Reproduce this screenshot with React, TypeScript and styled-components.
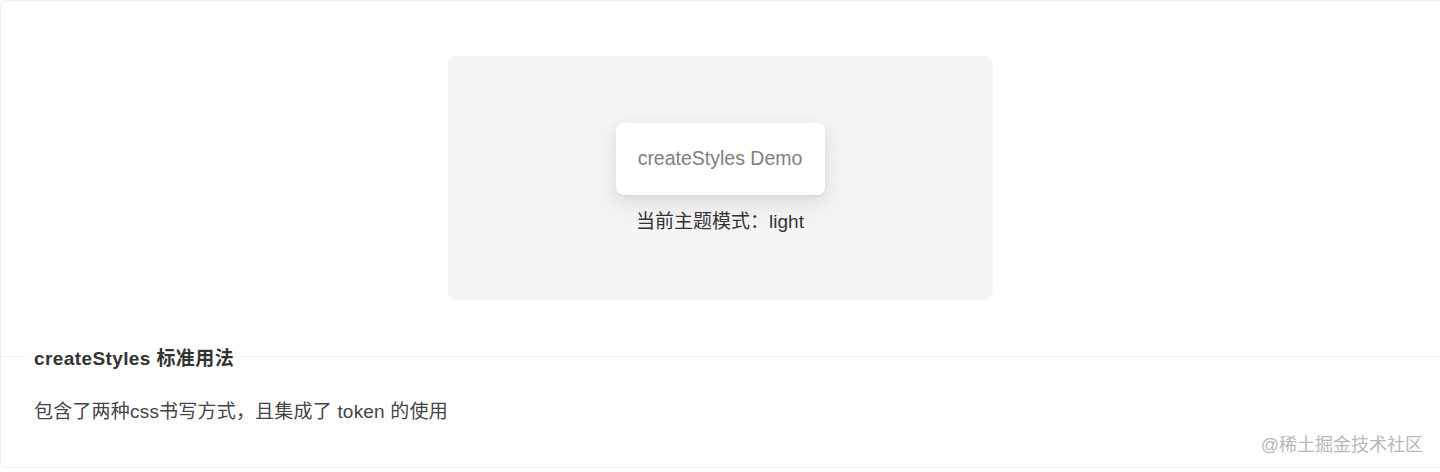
import styled, { createGlobalStyle } from "styled-components";

const GlobalStyle = createGlobalStyle`
  html, body {
    margin: 0;
    padding: 0;
    background: #fff;
  }
  body {
    font-family: "Liberation Sans", "Noto Sans CJK SC", sans-serif;
    overflow: hidden;
  }
`;

const CodeBox = styled.section`
  position: relative;
  width: calc(100% + 8px);
  height: 468px;
  box-sizing: border-box;
  border: 1px solid #efefef;
  border-radius: 6px;
  background: #fff;
`;

const Preview = styled.div`
  display: flex;
  justify-content: center;
  padding: 55px 0 44px;
  margin-right: 8px;
`;

const Stage = styled.div`
  width: 545px;
  height: 244px;
  border-radius: 8px;
  background: #f5f5f5;
  display: flex;
  flex-direction: column;
  align-items: center;
  justify-content: center;
  gap: 15px;
  box-sizing: border-box;
`;

const DemoCard = styled.div`
  width: 209px;
  height: 72px;
  border-radius: 8px;
  background: #fff;
  display: flex;
  align-items: center;
  justify-content: center;
  font-size: 19.5px;
  color: #808080;
  box-shadow: 0 6px 16px 0 rgba(0, 0, 0, 0.07),
    0 3px 6px -4px rgba(0, 0, 0, 0.1), 0 9px 28px 8px rgba(0, 0, 0, 0.04);
`;

const ThemeText = styled.div`
  font-size: 19px;
  line-height: 24px;
  color: #333;
`;

const Meta = styled.div`
  margin-right: 8px;
`;

const TitleRow = styled.div`
  display: flex;
  align-items: center;
  height: 24px;
`;

const Line = styled.div<{ $grow?: boolean }>`
  height: 1px;
  background: #efefef;
  width: ${(p) => (p.$grow ? "auto" : "25px")};
  flex: ${(p) => (p.$grow ? 1 : "none")};
`;

const Title = styled.div`
  padding: 0 8px;
  font-size: 19px;
  font-weight: 700;
  letter-spacing: 0.4px;
  color: #333;
  white-space: nowrap;
`;

const Description = styled.p`
  margin: 30px 0 0;
  padding-left: 33px;
  font-size: 19px;
  line-height: 28px;
  letter-spacing: 0.2px;
  color: #444;
`;

const Watermark = styled.div`
  position: absolute;
  right: 24px;
  bottom: 11px;
  font-size: 18px;
  color: #b8b8b8;
`;

export default function App() {
  return (
    <>
      <GlobalStyle />
      <CodeBox>
        <Preview>
          <Stage>
            <DemoCard>createStyles Demo</DemoCard>
            <ThemeText>当前主题模式：light</ThemeText>
          </Stage>
        </Preview>
        <Meta>
          <TitleRow>
            <Line />
            <Title>createStyles 标准用法</Title>
            <Line $grow />
          </TitleRow>
          <Description>包含了两种css书写方式，且集成了 token 的使用</Description>
        </Meta>
        <Watermark>@稀土掘金技术社区</Watermark>
      </CodeBox>
    </>
  );
}
